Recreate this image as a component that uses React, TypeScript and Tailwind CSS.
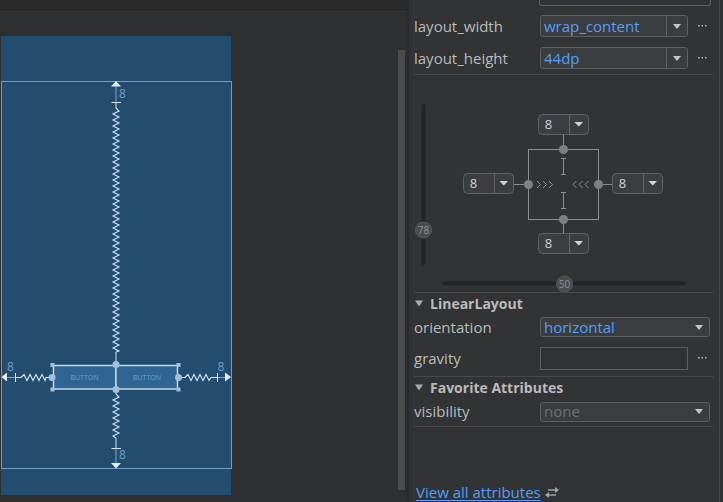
import React from "react";

const FONT = '"Open Sans", "DejaVu Sans", sans-serif';

function zigV(x: number, y0: number, y1: number, amp = 3, step = 3) {
  let d = `M${x} ${y0}`;
  let i = 0;
  for (let y = y0 + step; y < y1; y += step) {
    i++;
    d += ` L${x + (i % 2 ? amp : -amp)} ${y}`;
  }
  d += ` L${x} ${y1}`;
  return d;
}

function zigH(y: number, x0: number, x1: number, amp = 3, step = 3) {
  let d = `M${x0} ${y}`;
  let i = 0;
  for (let x = x0 + step; x < x1; x += step) {
    i++;
    d += ` L${x} ${y + (i % 2 ? -amp : amp)}`;
  }
  d += ` L${x1} ${y}`;
  return d;
}

const LINE = "#79a6cf";
const SPRING = "#d6e5f2";
const LABEL = "#6d9dc8";
const KNOB = "#a3c0da";

function Blueprint() {
  return (
    <svg width={231} height={459} className="block overflow-visible">
      <g transform="translate(-1,-36)" fontFamily={FONT}>
        <rect x={1.5} y={81.5} width={230} height={387} fill="none" stroke="#6e9dc7" />

        {/* top constraint */}
        <polygon points="116,81 111,86.5 121,86.5" fill="#e3eef8" />
        <line x1={116} y1={86} x2={116} y2={102} stroke={LINE} />
        <line x1={111.5} y1={102.5} x2={121} y2={102.5} stroke={SPRING} />
        <line x1={116} y1={102} x2={116} y2={108} stroke={SPRING} />
        <path d={zigV(116, 108, 352)} fill="none" stroke={SPRING} strokeWidth={1.1} />
        <line x1={116} y1={352} x2={116} y2={362} stroke={SPRING} />
        <text x={119} y={98} fontSize={12} fill={LABEL}>8</text>

        {/* bottom constraint */}
        <line x1={116} y1={392} x2={116} y2={394} stroke={SPRING} />
        <path d={zigV(116, 394, 438)} fill="none" stroke={SPRING} strokeWidth={1.1} />
        <line x1={116} y1={438} x2={116} y2={448} stroke={SPRING} />
        <line x1={111.5} y1={448.5} x2={121} y2={448.5} stroke={SPRING} />
        <line x1={116} y1={449} x2={116} y2={463} stroke={LINE} />
        <polygon points="111,463 121,463 116,468.5" fill="#e3eef8" />
        <text x={119} y={459} fontSize={12} fill={LABEL}>8</text>

        {/* left constraint */}
        <polygon points="1.5,377 7,372.5 7,381.5" fill="#e3eef8" />
        <line x1={7} y1={377.5} x2={15} y2={377.5} stroke={LINE} />
        <line x1={15.5} y1={373} x2={15.5} y2={382} stroke={SPRING} />
        <line x1={15} y1={377.5} x2={21} y2={377.5} stroke={SPRING} />
        <path d={zigH(377.5, 21, 46)} fill="none" stroke={SPRING} strokeWidth={1.1} />
        <line x1={46} y1={377.5} x2={50} y2={377.5} stroke={SPRING} />
        <text x={7} y={371} fontSize={12} fill={LABEL}>8</text>

        {/* right constraint */}
        <line x1={180} y1={377.5} x2={185} y2={377.5} stroke={SPRING} />
        <path d={zigH(377.5, 185, 211)} fill="none" stroke={SPRING} strokeWidth={1.1} />
        <line x1={211} y1={377.5} x2={217} y2={377.5} stroke={SPRING} />
        <line x1={217.5} y1={373} x2={217.5} y2={382} stroke={SPRING} />
        <line x1={218} y1={377.5} x2={225} y2={377.5} stroke={LINE} />
        <polygon points="225,372.5 225,381.5 231,377" fill="#e3eef8" />
        <text x={217.5} y={371} fontSize={12} fill={LABEL}>8</text>

        {/* buttons */}
        <rect x={53.5} y={365.5} width={62.5} height={23.5} fill="#2e6593" stroke="#c3d8eb" strokeWidth={1.5} />
        <rect x={116} y={365.5} width={61.5} height={23.5} fill="#2e6593" stroke="#c3d8eb" strokeWidth={1.5} />
        <text x={84.5} y={380} fontSize={7} fill="#6f9fc9" textAnchor="middle">BUTTON</text>
        <text x={147} y={380} fontSize={7} fill="#6f9fc9" textAnchor="middle">BUTTON</text>

        {/* handles */}
        <rect x={50.5} y={363} width={4} height={4} fill={KNOB} />
        <rect x={176.5} y={363} width={4} height={4} fill={KNOB} />
        <rect x={50.5} y={387.5} width={4} height={4} fill={KNOB} />
        <rect x={176.5} y={387.5} width={4} height={4} fill={KNOB} />
        <circle cx={52} cy={377.5} r={3.5} fill={KNOB} />
        <circle cx={178.5} cy={377.5} r={3.5} fill={KNOB} />
        <circle cx={116} cy={364.5} r={3.5} fill={KNOB} />
        <circle cx={116} cy={389.5} r={3.5} fill={KNOB} />
      </g>
    </svg>
  );
}

const WG = "#8b8d8f";

function ValBox({ x, y }: { x: number; y: number }) {
  return (
    <g>
      <rect x={x + 0.5} y={y + 0.5} width={50} height={20} rx={4} fill="#3b3e40" stroke="#5f6264" />
      <line x1={x + 31.5} y1={y + 0.5} x2={x + 31.5} y2={y + 20.5} stroke="#5f6264" />
      <text x={x + 10.5} y={y + 15} fontSize={13} fill="#c9d3dd" textAnchor="middle">8</text>
      <polygon points={`${x + 36.5},${y + 8} ${x + 45},${y + 8} ${x + 40.75},${y + 12.5}`} fill="#d2d4d6" />
    </g>
  );
}

function Chevrons({ x, dir }: { x: number; dir: 1 | -1 }) {
  const items = [0, 6, 12];
  return (
    <g stroke={WG} fill="none" strokeWidth={1}>
      {items.map((o) => {
        const x0 = x + o;
        return dir === 1 ? (
          <polyline key={o} points={`${x0},181 ${x0 + 3.5},184.5 ${x0},188`} />
        ) : (
          <polyline key={o} points={`${x0 + 3.5},181 ${x0},184.5 ${x0 + 3.5},188`} />
        );
      })}
    </g>
  );
}

function ConstraintWidget() {
  return (
    <svg width={310} height={217} className="block">
      <g transform="translate(-409,-75)" fontFamily={FONT}>
        {/* vertical slider */}
        <rect x={421.5} y={104} width={4} height={161} rx={2} fill="#232425" />
        <circle cx={423.5} cy={230} r={8} fill="#4a4c4e" stroke="#55585a" />
        <text x={423.5} y={233.5} fontSize={10} fill="#8e9092" textAnchor="middle">78</text>
        {/* horizontal slider */}
        <rect x={442} y={281.5} width={244} height={4} rx={2} fill="#232425" />
        <circle cx={564.5} cy={284} r={8} fill="#4a4c4e" stroke="#55585a" />
        <text x={564.5} y={287.5} fontSize={10} fill="#8e9092" textAnchor="middle">50</text>

        {/* square */}
        <rect x={528.5} y={149.5} width={70} height={70} fill="none" stroke={WG} />
        <line x1={563.5} y1={134} x2={563.5} y2={145} stroke={WG} />
        <line x1={563.5} y1={224} x2={563.5} y2={233} stroke={WG} />
        <line x1={513} y1={184.5} x2={524} y2={184.5} stroke={WG} />
        <line x1={603} y1={184.5} x2={612} y2={184.5} stroke={WG} />

        {/* I markers */}
        <g stroke={WG}>
          <line x1={563.5} y1={158} x2={563.5} y2={175} />
          <line x1={561} y1={158.5} x2={566} y2={158.5} />
          <line x1={561} y1={174.5} x2={566} y2={174.5} />
          <line x1={563.5} y1={192} x2={563.5} y2={209} />
          <line x1={561} y1={192.5} x2={566} y2={192.5} />
          <line x1={561} y1={208.5} x2={566} y2={208.5} />
        </g>
        <Chevrons x={537} dir={1} />
        <Chevrons x={573} dir={-1} />

        <circle cx={563.5} cy={149.5} r={4.5} fill="#7e8082" />
        <circle cx={563.5} cy={219.5} r={4.5} fill="#7e8082" />
        <circle cx={528.5} cy={184.5} r={4.5} fill="#7e8082" />
        <circle cx={598.5} cy={184.5} r={4.5} fill="#7e8082" />

        <ValBox x={538} y={114} />
        <ValBox x={538} y={233} />
        <ValBox x={463} y={173} />
        <ValBox x={612} y={173} />
      </g>
    </svg>
  );
}

function Caret() {
  return (
    <svg width={8} height={5} className="block">
      <polygon points="0,0 8,0 4,5" fill="#c4c6c8" />
    </svg>
  );
}

function Dots() {
  return (
    <svg width={9} height={2} className="block">
      <rect x={0} y={0} width={1.5} height={1.5} fill="#b5b7b9" />
      <rect x={3.5} y={0} width={1.5} height={1.5} fill="#b5b7b9" />
      <rect x={7} y={0} width={1.5} height={1.5} fill="#b5b7b9" />
    </svg>
  );
}

function Tri() {
  return (
    <svg width={8} height={7} className="block">
      <polygon points="0,0.5 8,0.5 4,6.5" fill="#a9abad" />
    </svg>
  );
}

function Sep() {
  return <div className="ml-[5px] w-[299px] h-px bg-[#46484a]" />;
}

export default function App() {
  return (
    <div
      className="flex w-[723px] h-[502px] bg-[#2e2f31] overflow-hidden text-[15px] text-[#bbbbbb]"
      style={{ fontFamily: FONT }}
    >
      {/* left / designer */}
      <div className="w-[407px] flex flex-col">
        <div className="h-[10px] bg-[#2b2b2b] border-b border-[#232323]" />
        <div className="flex flex-1">
          <div className="ml-[1px] mt-[26px] w-[230px] h-[459px] bg-[#224d6e]">
            <Blueprint />
          </div>
          <div className="flex-1" />
          <div className="mt-[40px] mr-[2px] w-[7px] h-[440px] bg-[#4a4b4d]" />
        </div>
      </div>
      <div className="w-[2px] bg-[#28292a]" />

      {/* right / attributes */}
      <div className="w-[310px] bg-[#313335] flex flex-col">
        <div className="ml-[130px] w-[172px] h-[6px] border border-t-0 border-[#5c5f61] rounded-b-[3px]" />

        <div className="mt-[4px] h-[32px] flex items-center pl-[5px]">
          <div className="w-[126px]">layout_width</div>
          <div className="w-[148px] h-[22px] flex items-center border border-[#5c5f61] rounded-[3px] bg-[#3a3d3f]">
            <div className="flex-1 pl-[3px] text-[#589df6] leading-none">wrap_content</div>
            <div className="w-[21px] h-full border-l border-[#5c5f61] flex items-center justify-center">
              <Caret />
            </div>
          </div>
          <div className="ml-[10px]"><Dots /></div>
        </div>

        <div className="h-[32px] flex items-center pl-[5px]">
          <div className="w-[126px]">layout_height</div>
          <div className="w-[148px] h-[22px] flex items-center border border-[#5c5f61] rounded-[3px] bg-[#3a3d3f]">
            <div className="flex-1 pl-[3px] text-[#589df6] leading-none">44dp</div>
            <div className="w-[21px] h-full border-l border-[#5c5f61] flex items-center justify-center">
              <Caret />
            </div>
          </div>
          <div className="ml-[10px]"><Dots /></div>
        </div>

        <Sep />
        <div className="h-[217px]">
          <ConstraintWidget />
        </div>
        <Sep />

        <div className="h-[21px] flex items-center pl-[6px] gap-[7px]">
          <Tri />
          <div className="font-bold text-[14px]">LinearLayout</div>
        </div>

        <div className="h-[26px] flex items-center pl-[5px]">
          <div className="w-[126px]">orientation</div>
          <div className="w-[170px] h-[20px] flex items-center border border-[#5c5f61] rounded-[3px] bg-[#3a3d3f]">
            <div className="flex-1 pl-[3px] text-[#589df6] leading-none">horizontal</div>
            <div className="w-[20px] flex items-center justify-center">
              <Caret />
            </div>
          </div>
        </div>

        <div className="h-[36px] flex items-center pl-[5px]">
          <div className="w-[126px]">gravity</div>
          <div className="w-[148px] h-[23px] border border-[#5c5f61] bg-[#303234]" />
          <div className="ml-[10px]"><Dots /></div>
        </div>

        <Sep />

        <div className="h-[21px] flex items-center pl-[6px] gap-[7px]">
          <Tri />
          <div className="font-bold text-[14px]">Favorite Attributes</div>
        </div>

        <div className="h-[27px] flex items-center pl-[5px]">
          <div className="w-[126px]">visibility</div>
          <div className="w-[170px] h-[20px] flex items-center border border-[#5c5f61] rounded-[3px] bg-[#3a3d3f]">
            <div className="flex-1 pl-[3px] text-[#6e7072] leading-none">none</div>
            <div className="w-[20px] flex items-center justify-center">
              <Caret />
            </div>
          </div>
        </div>

        <div className="mt-[1px]">
          <Sep />
        </div>

        <div className="flex-1" />

        <div className="h-[20px] flex items-center pl-[7px] gap-[4px]">
          <span className="text-[#589df6] underline underline-offset-2">View all attributes</span>
          <svg width={14} height={11} className="block">
            <g stroke="#a2a4a6" strokeWidth={1.5} fill="#a2a4a6">
              <line x1={3} y1={3} x2={10} y2={3} />
              <line x1={4} y1={8} x2={11} y2={8} />
            </g>
            <polygon points="10,0 14,3 10,6" fill="#a2a4a6" />
            <polygon points="4,5 0,8 4,11" fill="#a2a4a6" />
          </svg>
        </div>
      </div>

      <div className="w-px bg-[#444648]" />
      <div className="flex-1 bg-[#2f3133]" />
    </div>
  );
}
